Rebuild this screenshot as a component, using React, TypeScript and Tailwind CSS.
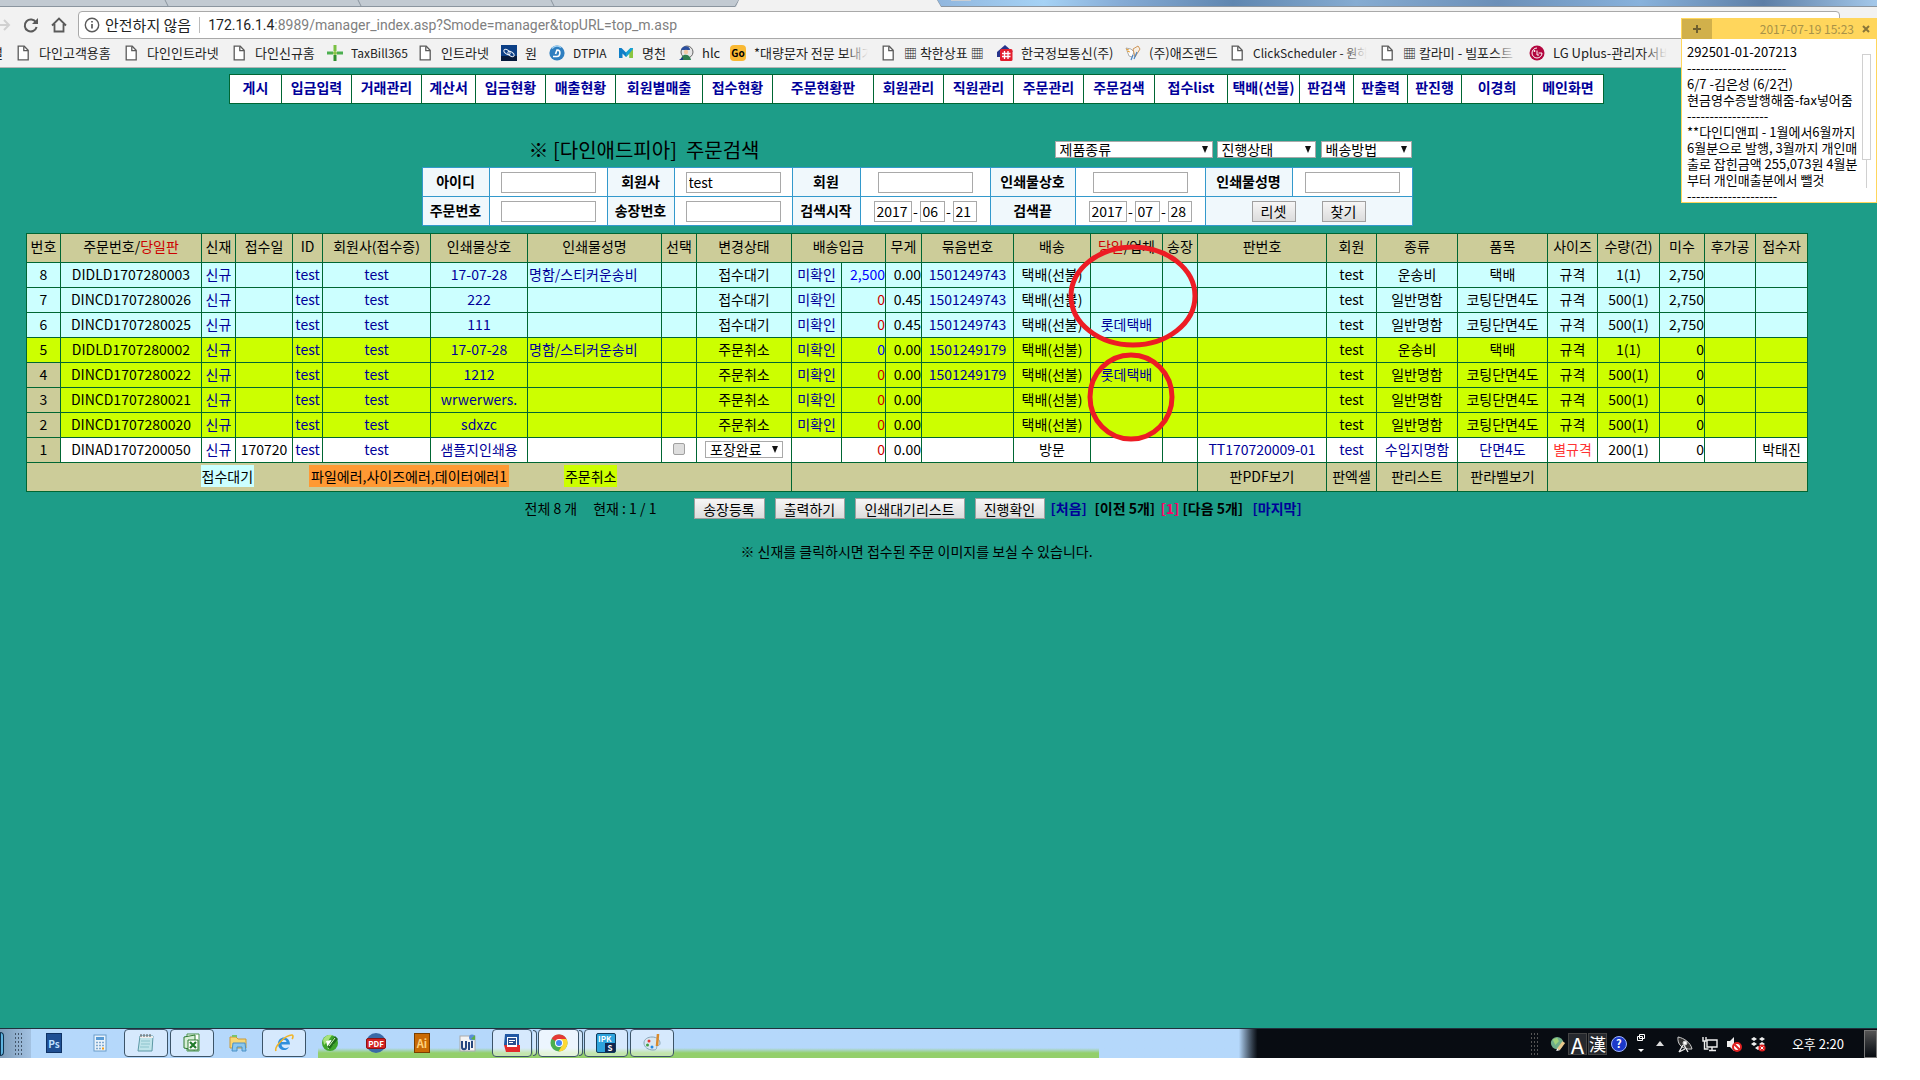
import type { ReactNode } from "react";

const KR = "font-['Noto_Sans_CJK_KR',sans-serif]";

/* ---------- icons ---------- */

const FileIcon = () => (
  <svg viewBox="0 0 16 16" className="size-4 shrink-0" fill="#fff" stroke="#5a5a5a" strokeWidth="1.3">
    <path d="M3.2 1.2h6l4 4v9.6h-10z" />
    <path d="M8.8 1.4v4.2h4.2" fill="none" />
  </svg>
);
const TaxIcon = () => (
  <svg viewBox="0 0 16 16" className="size-4 shrink-0">
    <path d="M6.500 0h3v6h-3z" fill="#7ac143" />
    <path d="M6.500 10h3v6h-3z" fill="#2f8f2f" />
    <path d="M0 6.500h6v3H0zM10 6.500h6v3h-6z" fill="#4caf50" />
    <circle cx="8" cy="8" r="2" fill="#8bc34a" />
  </svg>
);
const KnotIcon = () => (
  <svg viewBox="0 0 16 16" className="size-4 shrink-0">
    <rect width="16" height="16" fill="#0c3f86" />
    <path d="M0 11h16v5H0z" fill="#061a3c" />
    <g fill="none" stroke="#e8eef7" strokeWidth="1">
      <ellipse cx="6" cy="7" rx="3.500" ry="2" transform="rotate(35 6 7)" />
      <ellipse cx="10" cy="9" rx="3.500" ry="2" transform="rotate(35 10 9)" />
    </g>
  </svg>
);
const DIcon = () => (
  <svg viewBox="0 0 16 16" className="size-4 shrink-0">
    <circle cx="8" cy="8" r="7.600" fill="#2f7fc0" />
    <path d="M3 3.500a7 7 0 0 1 9-1" stroke="#9fd0f2" strokeWidth="1.500" fill="none" />
    <path d="M4 11.500h4c3.500 0 4-6.500.5-6.500H8L6.500 9" stroke="#fff" strokeWidth="1.600" fill="none" />
  </svg>
);
const MIcon = () => (
  <svg viewBox="0 0 16 16" className="size-4 shrink-0">
    <path d="M1 13V3h2.500L8 7.500V12L4.500 8.500V13z" fill="#0f7fc8" />
    <path d="M15 13V3h-2.500L8 7.500V12l3.500-3.500V13z" fill="#36b37e" />
    <path d="M11.500 8.500V13H15V3z" fill="#8bc53f" />
    <path d="M8 7.500L12.500 3H15v1L8 12z" fill="#17a0d8" />
  </svg>
);
const HlcIcon = () => (
  <svg viewBox="0 0 16 16" className="size-4 shrink-0">
    <circle cx="9" cy="7" r="6" fill="#e6e6e6" stroke="#666" />
    <path d="M3 5c1-5 9-5 9 0z" fill="#2b4f9e" />
    <circle cx="8" cy="7" r="2.200" fill="#f2c9a5" />
    <path d="M3 15c0-7 9-7 10 0z" fill="#2e7d4f" />
    <path d="M1 15l4-3v3z" fill="#1d3b88" />
  </svg>
);
const GoIcon = () => (
  <span className="flex size-4 shrink-0 items-center justify-center rounded-sm bg-[#f9b934] text-[10px] font-bold text-black">
    Go
  </span>
);
const HashIcon = () => (
  <svg viewBox="0 0 16 16" className="size-4 shrink-0">
    <path d="M0 7 8 0l8 7z" fill="#27348b" />
    <path d="M0 7h3v5H0z" fill="#27348b" />
    <rect x="3" y="4" width="12.500" height="12" rx="1.500" fill="#e31e2d" />
    <path d="M7.500 6v8M11 6v8M5 8.500h8.500M5 11.500h8.500" stroke="#fff" strokeWidth="1.300" />
  </svg>
);
const BirdIcon = () => (
  <svg viewBox="0 0 16 16" className="size-4 shrink-0">
    <path d="M1 3l5 1 3 3-2 5-3-1z" fill="#fff" stroke="#999" strokeWidth=".8" />
    <path d="M8 4l5-3 2 3-5 8z" fill="#f7efe4" stroke="#c98b4a" strokeWidth=".9" />
    <path d="M1 4l3 1M2 6l3 1" stroke="#e6a23c" />
    <path d="M8 10l-2 5M12 7l-3 7" stroke="#4e87c5" strokeWidth="1.200" />
  </svg>
);
const LgIcon = () => (
  <svg viewBox="0 0 16 16" className="size-4 shrink-0">
    <circle cx="8" cy="8" r="7.500" fill="#b3063f" />
    <path d="M8 3a5 5 0 1 0 5 5H9.500" stroke="#fff" fill="none" />
    <path d="M8 5.500V10h2" stroke="#fff" fill="none" />
    <circle cx="5.500" cy="6" r=".9" fill="#fff" />
  </svg>
);

/* ---------- browser chrome ---------- */

const bookmarks: { icon: ReactNode; text: string; cls: string; fade?: boolean }[] = [
  { icon: <FileIcon />, text: "다인고객용홈", cls: "w-[108px] text-[13px]" },
  { icon: <FileIcon />, text: "다인인트라넷", cls: "w-[108px] text-[13px]" },
  { icon: <FileIcon />, text: "다인신규홈", cls: "w-[96px] text-[13px]" },
  { icon: <TaxIcon />, text: "TaxBill365", cls: "w-[90px] text-[12px]" },
  { icon: <FileIcon />, text: "인트라넷", cls: "w-[84px] text-[13px]" },
  { icon: <KnotIcon />, text: "원", cls: "w-[48px] text-[13px]" },
  { icon: <DIcon />, text: "DTPIA", cls: "w-[69px] text-[12px]" },
  { icon: <MIcon />, text: "명천", cls: "w-[60px] text-[13px]" },
  { icon: <HlcIcon />, text: "hlc", cls: "w-[52px] text-[13px]" },
  { icon: <GoIcon />, text: "*대량문자 전문 보내기", cls: "w-[150px] text-[13px] pr-3", fade: true },
  { icon: <FileIcon />, text: "▦ 착한상표 ▦", cls: "w-[117px] text-[13px]" },
  { icon: <HashIcon />, text: "한국정보통신(주)", cls: "w-[128px] text-[13px]" },
  { icon: <BirdIcon />, text: "(주)애즈랜드", cls: "w-[104px] text-[13px]" },
  { icon: <FileIcon />, text: "ClickScheduler - 원하", cls: "w-[150px] text-[12px] pr-3", fade: true },
  { icon: <FileIcon />, text: "▦ 칼라미 - 빌포스트", cls: "w-[150px] text-[13px] pr-3", fade: true },
  { icon: <LgIcon />, text: "LG Uplus-관리자서비", cls: "w-[150px] text-[13px] pr-3", fade: true },
];

function Browser() {
  return (
    <header className="bg-[#f2f2f2]">
      <svg className="block h-[7px] w-full" preserveAspectRatio="none" viewBox="0 0 1877 7">
        <defs>
          <linearGradient id="glass">
            <stop offset="0" stopColor="#8fb4dc" />
            <stop offset=".12" stopColor="#a5d2f5" />
            <stop offset=".2" stopColor="#86acd6" />
            <stop offset=".32" stopColor="#5f86b0" />
            <stop offset=".45" stopColor="#86acd2" />
            <stop offset=".6" stopColor="#6b8fb8" />
            <stop offset=".75" stopColor="#88b2dc" />
            <stop offset=".88" stopColor="#5d7ea6" />
            <stop offset="1" stopColor="#a4c8ea" />
          </linearGradient>
        </defs>
        <rect x="930" width="947" height="7" fill="url(#glass)" />
        <rect width="740" height="7" fill="#c2cad2" />
        <path d="M0 6.500H735L739 0M165 0l3 6M358 0l3 6M551 0l3 6M937 0l4 6.500H1877" stroke="#8b959f" fill="none" />
        <path d="M736 7l3-7h198l4 7z" fill="#f2f2f2" />
        <path d="M951 0h20v1h-20z" fill="#c9ced4" />
      </svg>
      <div className="flex h-[36px] items-center pr-[37px]">
        <svg viewBox="0 0 78 28" className="h-7 w-[78px] shrink-0" fill="none">
          <path d="M0 14h8M4 9l5 5-5 5" stroke="#d0d0d0" strokeWidth="2" />
          <path d="M36 11.500a6 6 0 1 0 .6 4.500" stroke="#5a5a5a" strokeWidth="2" />
          <path d="M38 7v6h-6z" fill="#5a5a5a" />
          <path d="M52 14.500l7-7 7 7M54.500 13v7.500h9V13" stroke="#5a5a5a" strokeWidth="1.800" />
        </svg>
        <div className="flex h-[28px] flex-1 items-center rounded-sm border border-[#a9a9a9] bg-white pl-[5px] text-[15px]">
          <svg viewBox="0 0 16 16" className="size-4 shrink-0" fill="none" stroke="#5a5a5a" strokeWidth="1.400">
            <circle cx="8" cy="8" r="6.700" />
            <path d="M8 7v4.500M8 4v1.600" strokeWidth="1.700" />
          </svg>
          <span className="ml-[5px] whitespace-nowrap text-[#222]">안전하지 않음</span>
          <span className="mx-2 h-4 w-px shrink-0 bg-[#bbb]" />
          <div role="textbox" aria-label="URL" className="font-[Roboto] text-[14px] whitespace-nowrap text-[#808080]">
            <span className="text-[#222]">172.16.1.4</span>:8989/manager_index.asp?Smode=manager&amp;topURL=top_m.asp
          </div>
        </div>
      </div>
      <nav className="flex h-[25px] items-center overflow-hidden border-b border-[#b5b5b5] pb-1 text-[#222]">
        <span className="flex w-[15px] shrink-0 overflow-hidden text-[13px]">
          <span className="-ml-[9px]">널</span>
        </span>
        {bookmarks.map((b, i) => (
          <a key={i} href="#" className={"relative flex shrink-0 items-center gap-2 overflow-hidden leading-5 whitespace-nowrap " + b.cls}>
            {b.icon}
            <span className="overflow-hidden">{b.text}</span>
            {b.fade && <span className="absolute right-3 h-full w-6 bg-linear-to-r from-transparent to-[#f2f2f2]" />}
          </a>
        ))}
      </nav>
    </header>
  );
}

/* ---------- sticky note ---------- */

const noteLines = [
  "292501-01-207213",
  "----------------------",
  "6/7 -김은성 (6/2건)",
  "현금영수증발행해줌-fax넣어줌",
  "------------------",
  "**다인디앤피 - 1월에서6월까지",
  "6월분으로 발행, 3월까지 개인매",
  "출로 잡힌금액 255,073원 4월분",
  "부터 개인매출분에서 뺄것",
  "--------------------",
];

function Note() {
  return (
    <aside className="absolute top-[18px] right-0 w-[196px] border border-[#ffd65c] bg-white text-[12px] text-black">
      <div className="flex h-[20px] items-center bg-[#ffd65c] text-[#a89248]">
        <button className="flex h-full w-[30px] items-center justify-center bg-[#d1b04b]" aria-label="+">
          <svg viewBox="0 0 8 8" className="size-2" stroke="#6f5f2e" strokeWidth="2"><path d="M4 0v8M0 4h8" /></svg>
        </button>
        <span className="ml-auto">2017-07-19 15:23</span>
        <button className="mr-[6px] ml-2" aria-label="×">
          <svg viewBox="0 0 8 8" className="size-2" stroke="#8a7638" strokeWidth="2"><path d="M1 1l6 6M7 1 1 7" /></svg>
        </button>
      </div>
      <div className="flex h-[163px] overflow-hidden">
        <div className="flex-1 pt-[5px] pl-[5px] text-[13px] leading-4 whitespace-nowrap">
          {noteLines.map((l, i) => (
            <div key={i}>{l}</div>
          ))}
        </div>
        <div className="mt-[15px] mr-[5px] -ml-2 flex w-[9px] shrink-0 flex-col items-center">
          <div className="h-[106px] w-full border border-[#d0d0d0]" />
          <div className="h-[28px] w-px bg-[#d0d0d0]" />
        </div>
      </div>
    </aside>
  );
}

/* ---------- page ---------- */

const menu: [string, string][] = [
  ["게시", "w-[52px]"],
  ["입금입력", "w-[70px]"],
  ["거래관리", "w-[70px]"],
  ["계산서", "w-[54px]"],
  ["입금현황", "w-[70px]"],
  ["매출현황", "w-[70px]"],
  ["회원별매출", "w-[87px]"],
  ["접수현황", "w-[70px]"],
  ["주문현황판", "w-[101px]"],
  ["회원관리", "w-[70px]"],
  ["직원관리", "w-[70px]"],
  ["주문관리", "w-[70px]"],
  ["주문검색", "w-[71px]"],
  ["접수list", "w-[73px]"],
  ["택배(선불)", "w-[72px]"],
  ["판검색", "w-[54px]"],
  ["판출력", "w-[54px]"],
  ["판진행", "w-[54px]"],
  ["이경희", "w-[71px]"],
  ["메인화면", "w-[71px]"],
];

function Select({ label, cls }: { label: string; cls: string }) {
  return (
    <span className={"relative block " + cls}>
      <select aria-label={label} className="block h-[17px] w-full appearance-none border border-[#a9a9a9] bg-white pl-1 text-[14px] leading-[15px] text-black">
        <option>{label}</option>
      </select>
      <svg viewBox="0 0 8 7" className="pointer-events-none absolute top-[5px] right-1 h-[7px] w-2">
        <path d="M1 0h6L4 7z" fill="#111" />
      </svg>
    </span>
  );
}

const box = "h-[21px] border border-[#a9a9a9] bg-white px-[2px] text-[14px] text-black";
const th = "border border-[#3399cc] bg-[#f0f8fc] font-bold";
const td = "border border-[#3399cc] bg-white";

function Field({ id, label, value = "" }: { id: string; label: string; value?: string }) {
  return (
    <>
      <th className={th}><label htmlFor={id}>{label}</label></th>
      <td className={td}>
        <input id={id} defaultValue={value} className={"mx-auto block w-[95px] " + box} />
      </td>
    </>
  );
}

function DateField({ id, label, parts }: { id: string; label: string; parts: string[] }) {
  return (
    <>
      <th className={th}><label htmlFor={id}>{label}</label></th>
      <td className={td}>
        <div className="flex items-center justify-center">
          <input id={id} defaultValue={parts[0]} className={"w-[38px] " + box} />
          <span className="w-2 text-center">-</span>
          <input aria-label={label} defaultValue={parts[1]} className={"w-[25px] " + box} />
          <span className="w-2 text-center">-</span>
          <input aria-label={label} defaultValue={parts[2]} className={"w-[24px] " + box} />
        </div>
      </td>
    </>
  );
}

function Btn({ children, cls }: { children: ReactNode; cls: string }) {
  return (
    <button className={"h-[21px] border border-[#a0a0a0] bg-linear-to-b from-[#f6f6f6] to-[#dcdcdc] text-[14px] leading-[18px] text-black " + cls}>
      {children}
    </button>
  );
}

const cols = [
  "w-[34px]", "w-[141px]", "w-[34px]", "w-[57px]", "w-[30px]", "w-[108px]", "w-[97px]", "w-[134px]", "w-[35px]",
  "w-[95px]", "w-[50px]", "w-[44px]", "w-[36px]", "w-[92px]", "w-[77px]", "w-[72px]", "w-[35px]", "w-[129px]",
  "w-[50px]", "w-[81px]", "w-[90px]", "w-[50px]", "w-[62px]", "w-[45px]", "w-[51px]", "w-[52px]",
];

type Order = {
  no: string; order: string; date?: string; shop: string; name?: string; state: string; paid?: string; fee: string; feeBlue?: boolean;
  weight: string; bundle?: string; ship: string; vendor?: string; plate?: string; kind: string; item: string; size: string; qty: string;
  due: string; clerk?: string; bg: string; noBg: string; last?: boolean;
};

const cyan = "bg-[#ccffff]";
const lime = "bg-[#ccff00]";
const khaki = "bg-[#cccc99]";

const orders: Order[] = [
  { no: "8", order: "DIDLD1707280003", shop: "17-07-28", name: "명함/스티커운송비", state: "접수대기", paid: "미확인", fee: "2,500", feeBlue: true, weight: "0.00", bundle: "1501249743", ship: "택배(선불)", kind: "운송비", item: "택배", size: "규격", qty: "1(1)", due: "2,750", bg: cyan, noBg: cyan },
  { no: "7", order: "DINCD1707280026", shop: "222", state: "접수대기", paid: "미확인", fee: "0", weight: "0.45", bundle: "1501249743", ship: "택배(선불)", kind: "일반명함", item: "코팅단면4도", size: "규격", qty: "500(1)", due: "2,750", bg: cyan, noBg: cyan },
  { no: "6", order: "DINCD1707280025", shop: "111", state: "접수대기", paid: "미확인", fee: "0", weight: "0.45", bundle: "1501249743", ship: "택배(선불)", vendor: "롯데택배", kind: "일반명함", item: "코팅단면4도", size: "규격", qty: "500(1)", due: "2,750", bg: cyan, noBg: cyan },
  { no: "5", order: "DIDLD1707280002", shop: "17-07-28", name: "명함/스티커운송비", state: "주문취소", paid: "미확인", fee: "0", feeBlue: true, weight: "0.00", bundle: "1501249179", ship: "택배(선불)", kind: "운송비", item: "택배", size: "규격", qty: "1(1)", due: "0", bg: lime, noBg: lime },
  { no: "4", order: "DINCD1707280022", shop: "1212", state: "주문취소", paid: "미확인", fee: "0", weight: "0.00", bundle: "1501249179", ship: "택배(선불)", vendor: "롯데택배", kind: "일반명함", item: "코팅단면4도", size: "규격", qty: "500(1)", due: "0", bg: lime, noBg: khaki },
  { no: "3", order: "DINCD1707280021", shop: "wrwerwers.", state: "주문취소", paid: "미확인", fee: "0", weight: "0.00", ship: "택배(선불)", kind: "일반명함", item: "코팅단면4도", size: "규격", qty: "500(1)", due: "0", bg: lime, noBg: khaki },
  { no: "2", order: "DINCD1707280020", shop: "sdxzc", state: "주문취소", paid: "미확인", fee: "0", weight: "0.00", ship: "택배(선불)", kind: "일반명함", item: "코팅단면4도", size: "규격", qty: "500(1)", due: "0", bg: lime, noBg: khaki },
  { no: "1", order: "DINAD1707200050", date: "170720", shop: "샘플지인쇄용", state: "포장완료", fee: "0", weight: "0.00", ship: "방문", plate: "TT170720009-01", kind: "수입지명함", item: "단면4도", size: "별규격", qty: "200(1)", due: "0", clerk: "박태진", bg: "bg-white", noBg: khaki, last: true },
];

const c = "border border-[#006633] p-0 leading-[22px] pb-[2px] ";
const link = (t?: string) => (t ? <a href="#" className="text-[#000099]">{t}</a> : null);

function OrderTable() {
  return (
    <div className="relative mt-[7px]">
      <table className="w-full table-fixed border-collapse text-center text-[14px] whitespace-nowrap">
        <colgroup>
          {cols.map((w, i) => (
            <col key={i} className={w} />
          ))}
        </colgroup>
        <thead>
          <tr className="h-[29px] bg-[#cccc99] [&>th]:border [&>th]:border-[#006633] [&>th]:p-0 [&>th]:pb-1 [&>th]:font-normal [&>th]:leading-[22px]">
            <th>번호</th>
            <th>주문번호/<span className="text-[#cc0000]">당일판</span></th>
            <th>신재</th>
            <th>접수일</th>
            <th>ID</th>
            <th>회원사(접수증)</th>
            <th>인쇄물상호</th>
            <th>인쇄물성명</th>
            <th>선택</th>
            <th>변경상태</th>
            <th colSpan={2}>배송입금</th>
            <th>무게</th>
            <th>묶음번호</th>
            <th>배송</th>
            <th><span className="text-[#cc0000]">당일</span>/업체</th>
            <th>송장</th>
            <th>판번호</th>
            <th>회원</th>
            <th>종류</th>
            <th>품목</th>
            <th>사이즈</th>
            <th>수량(건)</th>
            <th>미수</th>
            <th>후가공</th>
            <th>접수자</th>
          </tr>
        </thead>
        <tbody>
          {orders.map((o) => (
            <tr key={o.no} className={"h-[25px] " + o.bg}>
              <td className={c + o.noBg}>{o.no}</td>
              <td className={c}>{o.order}</td>
              <td className={c}>{link("신규")}</td>
              <td className={c}>{o.date}</td>
              <td className={c}>{link("test")}</td>
              <td className={c}>{link("test")}</td>
              <td className={c}>{link(o.shop)}</td>
              <td className={c + "pl-px text-left"}>{link(o.name)}</td>
              <td className={c}>
                {o.last && (
                  <input type="checkbox" aria-label="선택" className="mx-auto block size-3 appearance-none rounded-xs border border-[#a0a0a0] bg-[#dedede]" />
                )}
              </td>
              <td className={c}>{o.last ? <div className="flex justify-center text-left"><Select label={o.state} cls="w-[78px]" /></div> : o.state}</td>
              <td className={c}>{link(o.paid)}</td>
              <td className={c + "text-right " + (o.feeBlue ? "text-[#0000ff]" : "text-[#cc0000]")}>{o.fee}</td>
              <td className={c + "text-right"}>{o.weight}</td>
              <td className={c}>{link(o.bundle)}</td>
              <td className={c}>{o.ship}</td>
              <td className={c}>{link(o.vendor)}</td>
              <td className={c} />
              <td className={c}>{link(o.plate)}</td>
              <td className={c}>{o.last ? link("test") : "test"}</td>
              <td className={c}>{o.last ? link(o.kind) : o.kind}</td>
              <td className={c}>{o.last ? link(o.item) : o.item}</td>
              <td className={c + (o.last ? "text-[#ff3333]" : "")}>{o.size}</td>
              <td className={c}>{o.qty}</td>
              <td className={c + "text-right"}>{o.due}</td>
              <td className={c} />
              <td className={c}>{o.clerk}</td>
            </tr>
          ))}
        </tbody>
        <tfoot>
          <tr className="h-[29px] bg-[#cccc99]">
            <td colSpan={10} className={c}>
              <div className="flex justify-center gap-[55px]">
                <span className="bg-[#ccffff] px-px">접수대기</span>
                <span className="bg-[#ff9933] px-[2px]">파일에러,사이즈에러,데이터에러1</span>
                <span className="bg-[#ccff00] px-px">주문취소</span>
              </div>
            </td>
            <td colSpan={7} className={c} />
            <td className={c}>판PDF보기</td>
            <td className={c}>판엑셀</td>
            <td className={c}>판리스트</td>
            <td className={c}>판라벨보기</td>
            <td colSpan={5} className={c} />
          </tr>
        </tfoot>
      </table>
      <svg viewBox="0 0 130 104" className="pointer-events-none absolute top-[11px] left-[1042px] h-[104px] w-[130px]">
        <ellipse cx="65" cy="52" rx="62" ry="49" fill="none" stroke="#ed1c24" strokeWidth="5" />
      </svg>
      <svg viewBox="0 0 88 90" className="pointer-events-none absolute top-[119px] left-[1061px] h-[90px] w-[88px]">
        <ellipse cx="44" cy="45" rx="41" ry="42" fill="none" stroke="#ed1c24" strokeWidth="5" />
      </svg>
    </div>
  );
}

function Page() {
  return (
    <main className="flex-1 bg-[#1d9d88] pt-[6px] pr-[70px] pl-[26px] text-[14px] text-black">
      <nav className="mx-auto flex w-fit border-t border-l border-[#006633] bg-white text-center font-bold whitespace-nowrap">
        {menu.map(([t, w]) => (
          <a key={t} href="#" className={"h-[29px] shrink-0 border-r border-b border-[#006633] leading-[25px] text-[#000099] " + w}>
            {t}
          </a>
        ))}
      </nav>
      <section className="mx-auto mt-[29px] w-[990px]">
        <div className="flex h-[34px] items-center">
          <h1 className="w-[445px] text-center text-[20px] whitespace-pre">※ [다인애드피아]  주문검색</h1>
          <div className="flex flex-1 justify-end pb-[2px]">
            <Select label="제품종류" cls="w-[158px]" />
            <Select label="진행상태" cls="ml-1 w-[99px]" />
            <Select label="배송방법" cls="ml-[5px] w-[91px]" />
          </div>
        </div>
        <table className="w-full table-fixed border-collapse text-[14px] [&_td]:p-0 [&_th]:p-0 [&_th]:pb-px [&_tr]:h-[29px]">
          <colgroup>
            <col className="w-[67px]" /><col className="w-[118px]" /><col className="w-[67px]" /><col className="w-[118px]" />
            <col className="w-[68px]" /><col className="w-[130px]" /><col className="w-[85px]" /><col className="w-[130px]" />
            <col className="w-[87px]" /><col className="w-[120px]" />
          </colgroup>
          <tbody>
            <tr>
              <Field id="uid" label="아이디" />
              <Field id="company" label="회원사" value="test" />
              <Field id="member" label="회원" />
              <Field id="shop" label="인쇄물상호" />
              <Field id="pname" label="인쇄물성명" />
            </tr>
            <tr>
              <Field id="orderno" label="주문번호" />
              <Field id="invoice" label="송장번호" />
              <DateField id="from" label="검색시작" parts={["2017", "06", "21"]} />
              <DateField id="to" label="검색끝" parts={["2017", "07", "28"]} />
              <td colSpan={2} className="border border-[#3399cc] bg-[#f0f8fc]">
                <div className="flex justify-center gap-[26px]">
                  <Btn cls="w-[44px]">리셋</Btn>
                  <Btn cls="w-[44px]">찾기</Btn>
                </div>
              </td>
            </tr>
          </tbody>
        </table>
      </section>
      <OrderTable />
      <div className="mt-[6px] flex items-center justify-center whitespace-nowrap">
        <span className="flex w-[169px] gap-4">
          <span>전체 8 개</span>
          <span>현재 : 1 / 1</span>
        </span>
        <Btn cls="w-[71px]">송장등록</Btn>
        <Btn cls="ml-[10px] w-[70px]">출력하기</Btn>
        <Btn cls="ml-[10px] w-[110px]">인쇄대기리스트</Btn>
        <Btn cls="ml-[10px] w-[70px]">진행확인</Btn>
        <span className="ml-[6px] flex font-bold">
          <a href="#" className="w-[44px] text-[#000099]">[처음]</a>
          <span className="w-[66px]">[이전 5개]</span>
          <span className="w-[22px] text-[#ff0066]">[1]</span>
          <span className="w-[70px]">[다음 5개]</span>
          <a href="#" className="w-[56px] text-[#000099]">[마지막]</a>
        </span>
      </div>
      <p className="mt-[22px] text-center">※ 신재를 클릭하시면 접수된 주문 이미지를 보실 수 있습니다.</p>
    </main>
  );
}

/* ---------- taskbar ---------- */

const I = ({ children }: { children: ReactNode }) => (
  <svg viewBox="0 0 20 20" className="size-5">{children}</svg>
);

const apps: { el: ReactNode; open?: boolean; stack?: boolean; active?: boolean }[] = [
  { el: <span className="flex h-5 w-4 items-center justify-center border border-[#0f3264] bg-[#1f4f93] text-[10px] font-bold text-[#bfe0ff]">Ps</span> },
  { el: <I><rect x="4" y="2" width="12" height="16" fill="#eaf3fb" stroke="#6a9cc9" /><path d="M6 4h8v3H6z" fill="#5a9bd5" /><path d="M6 9.500h8M6 12.500h8M6 15.500h5" stroke="#7fa8cf" strokeDasharray="2 1" strokeWidth="1.600" /><path d="M12 15.500h2" stroke="#f39c12" strokeWidth="2" /></I> },
  { el: <I><path d="M4 3h13l-1 15H2z" fill="#bfe4ea" stroke="#5c98a5" /><path d="M4 3h13v2H4z" fill="#eee" /><path d="M5 1v3M8 1v3M11 1v3M14 1v3" stroke="#555" /><path d="M5 8h9M5 11h9M4 14h9" stroke="#8cc3cc" /></I>, open: true },
  { el: <I><path d="M5 1h12v17H5z" fill="#fff" stroke="#49934c" /><path d="M2 4l11-2v15L2 15z" fill="#d8efd8" stroke="#2c7a30" /><path d="M6 7h10v10H6z" fill="#fff" stroke="#2c7a30" /><path d="M8 9l6 6M14 9l-6 6" stroke="#217a2b" strokeWidth="2.200" /></I>, open: true },
  { el: <I><path d="M2 4h6l2 2h8v9H2z" fill="#f7d774" stroke="#c99b3a" /><path d="M4 2h5v2H4z" fill="#7cc36a" /><path d="M5 10h12l1 8h-4v-4H9v4H4z" fill="#8cc8ee" stroke="#4a90c6" /></I> },
  { el: <I><path d="M16 11.500H7.500c.5 4 5 4.500 7.500 2.500-2 5-11 4-11-3.500C4 2.500 16 2 16 11.500zM7.500 9H12.500C12 6 8 6 7.500 9z" fill="#2f8fdc" fillRule="evenodd" /><path d="M2 18C0 14 11 2 18 2c1.500 0 1 3 0 4" stroke="#f0b429" strokeWidth="1.600" fill="none" /></I>, open: true },
  { el: <I><circle cx="10" cy="10" r="8" fill="#3fa62a" /><path d="M3 7a8 8 0 0 1 9-5L8 8l-4 4z" fill="#a8e27c" /><path d="M6 8l5-1 3 4-6 5z" fill="#fff" /><path d="M7 14l8-11 3 3-8 10z" fill="#1f6f1a" /><path d="M9 13l6-8" stroke="#d9f5c4" /></I> },
  { el: <span className="relative flex size-5 items-center justify-center rounded-full bg-[#3a6aa6]"><span className="absolute rounded-xs border border-[#8c1212] bg-[#d22222] px-px text-[8px] leading-[9px] font-bold text-white">PDF</span></span> },
  { el: <span className="flex h-5 w-4 items-center justify-center border border-[#7a3f00] bg-[#c96a05] text-[11px] font-bold text-[#ffd27a]">Ai</span> },
  { el: <I><rect x="2" y="3" width="15" height="15" fill="#f4f4f4" stroke="#aaa" /><path d="M4 8v6c0 3 4 3 4 0V8M11 9v8M14 8v7" stroke="#26477e" strokeWidth="2" fill="none" /><circle cx="14" cy="4.500" r="3" fill="#5b8fd6" /><path d="M13 6l4-4v5z" fill="#5ab045" /></I> },
  { el: <I><path d="M3 1h14v11H2z" fill="#1f57a4" /><path d="M2 12h16v7H4z" fill="#e22b2b" /><rect x="5" y="4" width="10" height="10" fill="#fff" /><rect x="6" y="5" width="8" height="7" fill="#2a4f8f" /><path d="M7 7.500h6M7 9.500h4" stroke="#fff" /></I>, open: true, stack: true },
  { el: <I><circle cx="10" cy="10" r="8.500" fill="#4caf50" /><path d="M10 10L2.600 5.800A8.500 8.500 0 0 1 17.900 7z" fill="#e53935" /><path d="M10 6h7.500A8.500 8.500 0 0 1 9.500 18.500L13.500 12z" fill="#fdd835" /><circle cx="10" cy="10" r="4" fill="#fff" /><circle cx="10" cy="10" r="3" fill="#4285f4" /></I>, open: true, stack: true, active: true },
  { el: <span className="relative flex size-5 items-start rounded-xs border border-[#123b5c] bg-[#2ea3dc] pl-px text-[8px] leading-[9px] font-bold text-white">IPK<span className="absolute right-0 bottom-0 flex h-[9px] w-[10px] items-center justify-center bg-[#10264f]">S</span></span>, open: true },
  { el: <I><path d="M10 4c5 0 8 3 8 6s-2 2-3 3 1 4-4 4-9-3-9-7 4-6 8-6z" fill="#d9e8f2" stroke="#86a5b9" /><circle cx="7" cy="8" r="1.500" fill="#e53935" /><circle cx="5.500" cy="12" r="1.500" fill="#43a047" /><circle cx="10" cy="14" r="1.500" fill="#1e88e5" /><path d="M16 1l-1 12" stroke="#d98a2b" strokeWidth="2.500" /></I>, open: true },
];

function Taskbar() {
  return (
    <footer className="relative flex h-[30px] items-stretch overflow-hidden border-t border-[#20303c] bg-linear-to-r from-[#b5d8fb] from-0% via-[#b5d8fb] via-[66%] to-[#080c12] to-[67%]">
      <div className="absolute bottom-0 left-[318px] h-[10px] w-[781px] bg-linear-to-t from-[#93cf6b] from-50% to-transparent" />
      <div className="flex w-[31px] shrink-0 items-center gap-2 bg-linear-to-r from-[#7d9bb8] to-[#a3c2e2]">
        <span className="h-6 w-1 rounded-r-full border border-[#0e3350] bg-[#5fb4e0]" />
        <span className="ml-[2px] h-6 w-2 bg-[radial-gradient(#44576b_1px,transparent_1px)] bg-size-[3px_4px]" />
      </div>
      {apps.map((a, i) => (
        <div key={i} className="relative flex w-[46px] shrink-0 pb-px">
          <button
            aria-label="app"
            className={
              a.active
                ? "ml-px flex flex-1 items-center justify-center rounded-sm border border-[#3c5468] bg-white/75"
                : a.open
                  ? "mx-px flex flex-1 items-center justify-center rounded-sm border border-[#3c5468] bg-white/45"
                  : "flex flex-1 items-center justify-center"
            }
          >
            {a.el}
          </button>
          {a.stack && <span className="my-px w-1 rounded-r-sm border border-l-0 border-[#3c5468] bg-white/40" />}
        </div>
      ))}
      <div className="ml-auto flex items-center text-white">
        <span className="mr-3 h-6 w-2 bg-[radial-gradient(#555_1px,transparent_1px)] bg-size-[3px_4px]" />
        <svg viewBox="0 0 18 18" className="size-4"><circle cx="8" cy="8" r="7" fill="#6fae8a" /><path d="M3 4l5-2 2 4-4 4z" fill="#9fd37c" /><path d="M8 14l6-8 3 2-6 8z" fill="#e9c88c" /><path d="M8 14l3 2-4 1z" fill="#fff" /></svg>
        <span className="ml-[2px] flex h-[22px] w-[19px] items-center justify-center border border-[#444] bg-[#26292e] text-[22px] leading-5">A</span>
        <span className="ml-px flex h-[22px] w-[19px] items-center justify-center border border-[#444] bg-[#26292e] text-[17px] leading-5">漢</span>
        <span className="ml-1 flex size-4 items-center justify-center rounded-full border border-[#9fb4ff] bg-[#1c39c9] text-[11px] font-bold">?</span>
        <svg viewBox="0 0 10 22" className="ml-[9px] h-[22px] w-[10px]" fill="none" stroke="#fff"><path d="M3.500 1.500h5v4h-5zM1.500 3.500h5v4h-5z" /><path d="M2 16h6l-3 3z" fill="#fff" stroke="none" /></svg>
        <svg viewBox="0 0 8 5" className="ml-[10px] h-[5px] w-2"><path d="M0 5h8L4 0z" fill="#ddd" /></svg>
        <svg viewBox="0 0 18 18" className="ml-3 size-[18px]" fill="none" stroke="#ccc"><path d="M2 2c-1 7 4 13 14 12C15 8 8 3 2 2z" fill="#333" /><path d="M7 10l-4 7M8 10l4 7M3 17l6-3" stroke="#eee" strokeWidth="1.300" /><circle cx="9" cy="8" r="2" fill="#fff" /></svg>
        <svg viewBox="0 0 16 16" className="ml-2 size-4" fill="none" stroke="#eee" strokeWidth="1.400"><path d="M5 4h10v7H5zM7 14.500h7M10 11v3" /><path d="M1 1v4h3V1M2.500 5v8h4" /></svg>
        <svg viewBox="0 0 16 16" className="ml-2 size-4"><path d="M1 5h3l4-4v14l-4-4H1z" fill="#eee" /><circle cx="11" cy="11" r="4" fill="#fff" stroke="#e02020" strokeWidth="2" /><path d="M8.500 8.500l5 5" stroke="#e02020" strokeWidth="2" /></svg>
        <svg viewBox="0 0 16 16" className="ml-2 size-4"><path d="M1 3l3-2 3 2-3 2zM9 3l3-2 3 2-3 2zM1 8l3-2 3 2-3 2zM9 8l3-2 3 2-3 2zM5 12l3-2 3 2-3 2z" fill="#eee" /><circle cx="12" cy="12" r="3.500" fill="#e02020" /><path d="M10.500 10.500l3 3M13.500 10.500l-3 3" stroke="#fff" /></svg>
        <span className="ml-[26px] text-[13px] whitespace-nowrap">오후 2:20</span>
        <button aria-label="desktop" className="ml-[20px] h-[28px] w-[13px] border border-[#777] bg-linear-to-b from-[#555] to-[#080c12]" />
      </div>
    </footer>
  );
}

export default function App() {
  return (
    <div className={"min-h-screen bg-white pr-[43px] pb-[22px] " + KR}>
      <div className="relative flex min-h-[calc(100vh-22px)] flex-col overflow-hidden">
        <Browser />
        <Page />
        <Taskbar />
        <Note />
      </div>
    </div>
  );
}
